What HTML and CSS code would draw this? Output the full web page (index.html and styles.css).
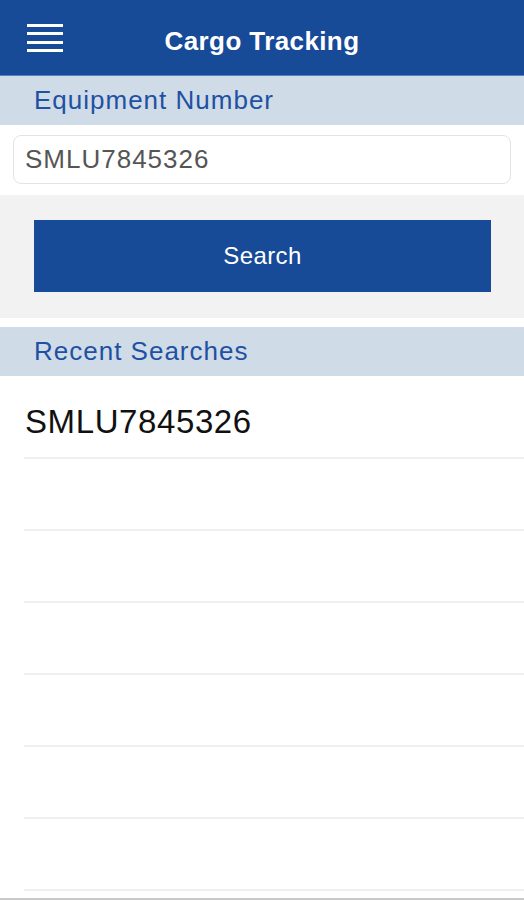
FILE: index.html
```html
<!DOCTYPE html>
<html lang="en">
<head>
  <meta charset="UTF-8">
  <meta name="viewport" content="width=device-width, initial-scale=1">
  <title>Cargo Tracking</title>
  <link rel="stylesheet" href="styles.css">
</head>
<body>
  <header class="topbar">
    <button class="menu-btn" aria-label="Menu">
      <svg width="36" height="28" viewBox="0 0 36 28">
        <rect x="0" y="0" width="36" height="3" fill="#fff"/>
        <rect x="0" y="8" width="36" height="3" fill="#fff"/>
        <rect x="0" y="17" width="36" height="3" fill="#fff"/>
        <rect x="0" y="25" width="36" height="3" fill="#fff"/>
      </svg>
    </button>
    <h1>Cargo Tracking</h1>
  </header>

  <div class="section-title">Equipment Number</div>
  <div class="input-wrap">
    <input type="text" id="equipment" value="SMLU7845326">
  </div>
  <div class="search-area">
    <button class="search-btn">Search</button>
  </div>

  <div class="section-title recent-title">Recent Searches</div>
  <ul class="recent">
    <li>SMLU7845326</li>
    <li></li>
    <li></li>
    <li></li>
    <li></li>
    <li></li>
    <li></li>
  </ul>
</body>
</html>
```

FILE: styles.css
```css
body { margin: 0; font-family: "Liberation Sans", Arial, sans-serif; background: #fff; color: #111; height: 900px; overflow: hidden; border-bottom: 2px solid #c9c9c9; box-sizing: border-box; }
.topbar { height: 76px; background: #174a97; display: flex; align-items: center; justify-content: center; position: relative; border-bottom: 1px solid #5a7fb8; box-sizing: border-box; padding-top: 7px; }
.topbar h1 { margin: 0; color: #fff; font-size: 26px; font-weight: bold; letter-spacing: 0.4px; }
.menu-btn { position: absolute; left: 27px; top: 24px; background: none; border: none; padding: 0; display: block; }
.menu-btn svg { display: block; }
.section-title { height: 49px; background: #cfdbe7; color: #1f51a3; font-size: 26px; letter-spacing: 1px; padding-left: 34px; display: flex; align-items: center; }
.input-wrap { background: #fff; padding: 10px 13px 11px 13px; height: 70px; box-sizing: border-box; }
.input-wrap input { width: 100%; height: 49px; box-sizing: border-box; border: 1px solid #e3e3e3; border-radius: 8px; padding: 0 11px; font-family: inherit; font-size: 26px; letter-spacing: 1px; color: #555; outline: none; }
.search-area { background: #f2f2f2; height: 123px; padding: 25px 33px 0 34px; box-sizing: border-box; }
.search-btn { width: 100%; height: 72px; background: #174a97; color: #fff; border: none; font-family: inherit; font-size: 24px; letter-spacing: 0.4px; display: block; }
.recent-title { margin-top: 9px; }
.recent { list-style: none; margin: 0; padding: 0 0 0 24px; }
.recent li { height: 72px; box-sizing: border-box; border-bottom: 2px solid #efefef; font-size: 33px; letter-spacing: 0.6px; display: flex; align-items: center; padding-left: 1px; }
.recent li:first-child { height: 83px; padding-top: 10px; }
```
